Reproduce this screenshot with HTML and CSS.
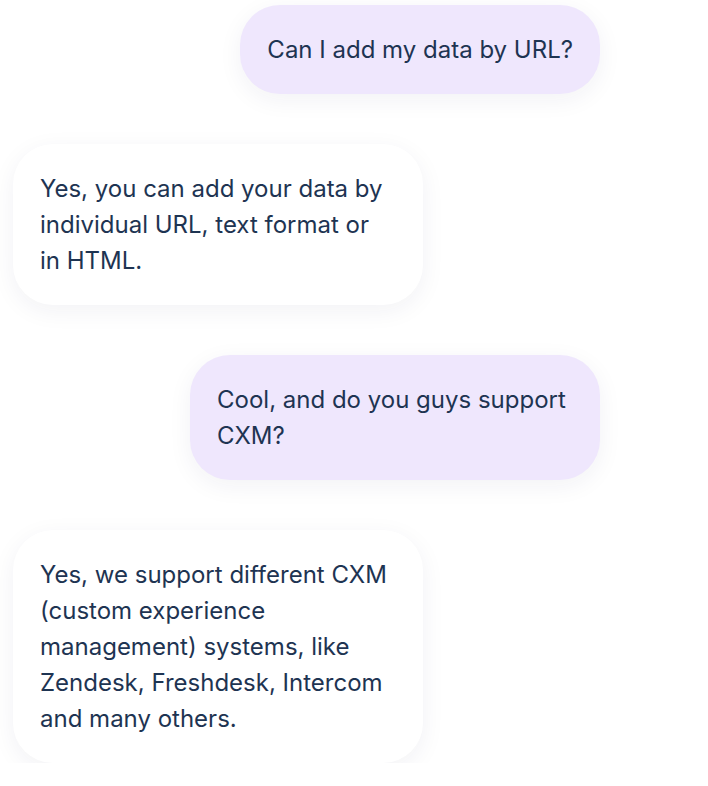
FILE: index.html
```html
<!DOCTYPE html>
<html lang="en">
<head>
<meta charset="utf-8">
<title>Chat</title>
<link rel="stylesheet" href="styles.css">
</head>
<body>
<main class="chat">
  <div class="msg msg-user">Can I add my data by URL?</div>
  <div class="msg msg-bot">Yes, you can add your data by individual URL, text format or in HTML.</div>
  <div class="msg msg-user">Cool, and do you guys support CXM?</div>
  <div class="msg msg-bot">Yes, we support different CXM (custom experience management) systems, like Zendesk, Freshdesk, Intercom and many others.</div>
</main>
</body>
</html>
```
FILE: styles.css
```css
html, body {
  margin: 0;
  padding: 0;
  background: #ffffff;
}
body {
  font-family: Inter, "Noto Sans", sans-serif;
  color: #1e3452;
}
.chat {
  display: flex;
  flex-direction: column;
  gap: 50px;
  padding: 5px 108px 0 13px;
}
.msg {
  box-sizing: border-box;
  max-width: 410px;
  padding: 27px 27px 26px;
  border-radius: 40px;
  font-size: 24px;
  line-height: 36px;
  box-shadow: 0 6px 24px rgba(30, 40, 80, 0.06);
}
.msg-user {
  align-self: flex-end;
  background: #efe7fd;
}
.msg-bot {
  align-self: flex-start;
  background: #ffffff;
  width: 410px;
  padding-right: 36px;
}
```
